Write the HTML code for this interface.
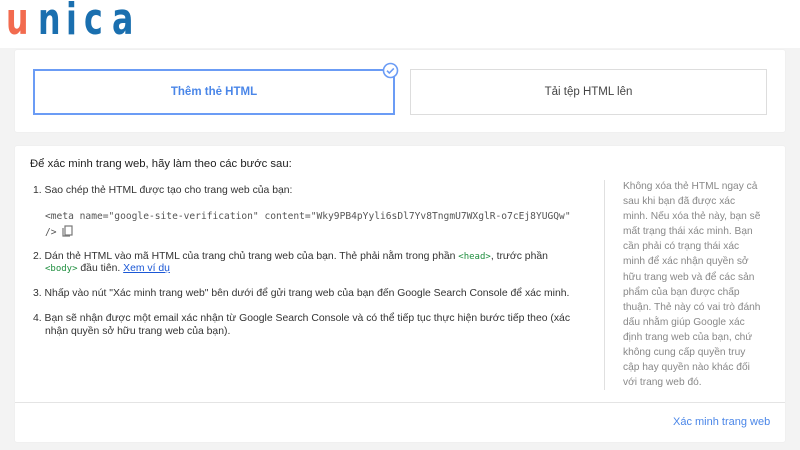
<!DOCTYPE html>
<html><head><meta charset="utf-8"><style>
*{margin:0;padding:0;box-sizing:border-box}
body{width:800px;height:450px;background:#f3f3f3;font-family:"Liberation Sans",Arial,sans-serif;position:relative;overflow:hidden;color:#333}
.hdr{position:absolute;left:0;top:0;width:800px;height:48px;background:#fff}
.L{position:absolute;top:-2px;font-size:44px;font-weight:bold;color:#1a6faf;font-family:"DejaVu Sans",sans-serif;line-height:44px;transform:scaleX(0.72);transform-origin:left}
.card{position:absolute;background:#fff;border-radius:2px;box-shadow:0 0 1px #ddd}
.btn{position:absolute;border:1px solid #ddd;background:#fff;font-size:11.5px;text-align:center;line-height:44px;color:#444}
.t{position:absolute;font-size:10.4px;line-height:12px;color:#333;white-space:nowrap}
.code{font-family:"DejaVu Sans Mono","Liberation Mono",monospace;font-size:9.6px;color:#555}
.g{color:#1e8e3e;font-family:"DejaVu Sans Mono",monospace;font-size:9px}
.side{position:absolute;left:623px;top:179px;white-space:nowrap;font-size:10.2px;line-height:15.1px;color:#888}
</style></head><body>
<div class="hdr">
<div class="L" style="left:6px;color:#f26b4f">u</div>
<div class="L" style="left:38px">n</div>
<div class="L" style="left:66px">i</div>
<div class="L" style="left:84px">c</div>
<div class="L" style="left:112px">a</div>
</div>
<div class="card" style="left:15px;top:50px;width:770px;height:82px"></div>
<div class="btn" style="left:33px;top:69px;width:362px;height:46px;border:2px solid #6b9cf5;color:#4a86e8;font-weight:bold;line-height:42px">Thêm thẻ HTML</div>
<svg style="position:absolute;left:382px;top:62px" width="17" height="17" viewBox="0 0 17 17"><circle cx="8.5" cy="8.5" r="7" fill="#fff" stroke="#6b9cf5" stroke-width="1.6"/><path d="M5 8.7l2.3 2.3 4.5-4.6" fill="none" stroke="#6b9cf5" stroke-width="1.6"/></svg>
<div class="btn" style="left:410px;top:69px;width:357px;height:46px">Tải tệp HTML lên</div>
<div class="card" style="left:15px;top:146px;width:770px;height:296px"></div>
<div style="position:absolute;left:15px;top:402px;width:770px;height:1px;background:#e4e4e4"></div>
<div style="position:absolute;left:604px;top:180px;width:1px;height:210px;background:#e0e0e0"></div>
<div class="t" style="left:30px;top:158px;color:#222;font-size:11.3px">Để xác minh trang web, hãy làm theo các bước sau:</div>
<div class="t" style="left:33px;top:185px">1. Sao chép thẻ HTML được tạo cho trang web của bạn:</div>
<div class="t code" style="left:45px;top:211px">&lt;meta name="google-site-verification" content="Wky9PB4pYyli6sDl7Yv8TngmU7WXglR-o7cEj8YUGQw"</div>
<div class="t code" style="left:45px;top:225px">/&gt; <svg width="11" height="12" viewBox="0 0 11 12" style="vertical-align:-2px"><rect x="3" y="1" width="7" height="9" fill="none" stroke="#777" stroke-width="1.2"/><path d="M1 3v8h7" fill="none" stroke="#777" stroke-width="1.2"/></svg></div>
<div class="t" style="left:33px;top:251px">2. Dán thẻ HTML vào mã HTML của trang chủ trang web của bạn. Thẻ phải nằm trong phần <span class="g">&lt;head&gt;</span>, trước phần</div>
<div class="t" style="left:45px;top:263px"><span class="g">&lt;body&gt;</span> đầu tiên. <span style="color:#1a57d6;text-decoration:underline">Xem ví dụ</span></div>
<div class="t" style="left:33px;top:288px">3. Nhấp vào nút "Xác minh trang web" bên dưới để gửi trang web của bạn đến Google Search Console để xác minh.</div>
<div class="t" style="left:33px;top:313px">4. Bạn sẽ nhận được một email xác nhận từ Google Search Console và có thể tiếp tục thực hiện bước tiếp theo (xác</div>
<div class="t" style="left:45px;top:326px">nhận quyền sở hữu trang web của bạn).</div>
<div class="side">Không xóa thẻ HTML ngay cả<br>sau khi bạn đã được xác<br>minh. Nếu xóa thẻ này, bạn sẽ<br>mất trạng thái xác minh. Bạn<br>cần phải có trạng thái xác<br>minh để xác nhận quyền sở<br>hữu trang web và để các sản<br>phẩm của bạn được chấp<br>thuận. Thẻ này có vai trò đánh<br>dấu nhằm giúp Google xác<br>định trang web của bạn, chứ<br>không cung cấp quyền truy<br>cập hay quyền nào khác đối<br>với trang web đó.</div>
<div class="t" style="left:673px;top:416px;color:#4a86e8;font-size:11px">Xác minh trang web</div>
</body></html>
